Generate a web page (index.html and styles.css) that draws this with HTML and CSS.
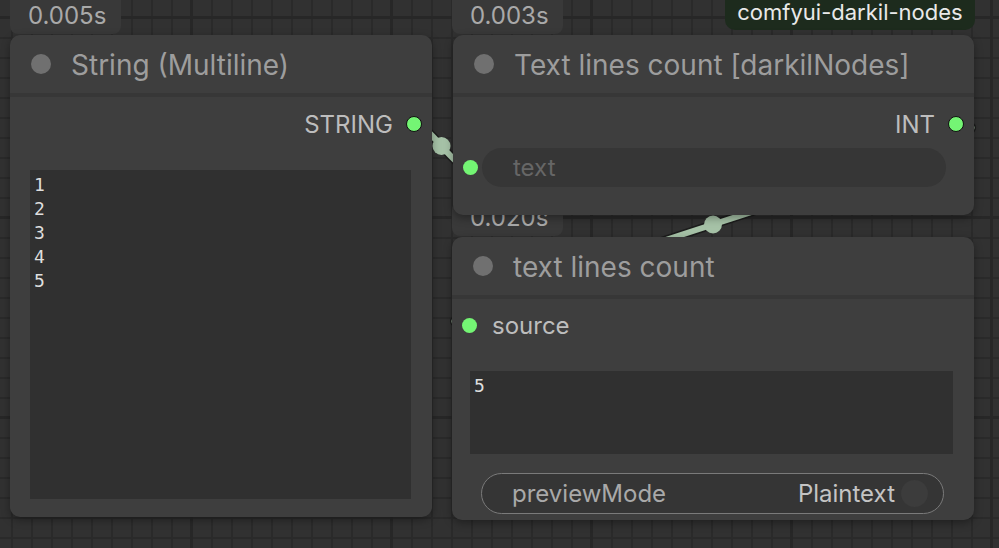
FILE: index.html
```html
<!DOCTYPE html>
<html lang="en">
<head>
    <meta charset="UTF-8">
    <meta name="viewport" content="width=device-width, initial-scale=1.0">
    <title>ComfyUI - text lines count</title>
    <link rel="stylesheet" href="styles.css">
</head>
<body>
    <div class="canvas">
        <svg class="links" width="999" height="548" viewBox="0 0 999 548">
            <!-- STRING -> text -->
            <path class="link-shadow" d="M413 124 C 431 124, 452 168, 470 168" />
            <path class="link" d="M413 124 C 431 124, 452 168, 470 168" />
            <circle class="link-dot" cx="441.5" cy="146" r="9" />
            <!-- INT -> source -->
            <path class="link-shadow" d="M956 124 C 1087 124, 339 325, 470 325" />
            <path class="link" d="M956 124 C 1087 124, 339 325, 470 325" />
            <circle class="link-dot" cx="713" cy="224.5" r="9" />
        </svg>

        <div class="time-badge badge-a">0.005s</div>
        <div class="time-badge badge-b">0.003s</div>
        <div class="time-badge badge-c">0.020s</div>
        <div class="pack-badge">comfyui-darkil-nodes</div>

        <!-- String (Multiline) -->
        <div class="node node-string">
            <div class="node-title">
                <span class="title-dot"></span>
                <span class="title-text">String (Multiline)</span>
            </div>
            <div class="node-body">
                <div class="slot-out">
                    <span>STRING</span>
                    <span class="slot-dot ring"></span>
                </div>
                <div class="textarea tall">1<br>2<br>3<br>4<br>5</div>
            </div>
        </div>

        <!-- Text lines count [darkilNodes] -->
        <div class="node node-count">
            <div class="node-title">
                <span class="title-dot"></span>
                <span class="title-text">Text lines count [darkilNodes]</span>
            </div>
            <div class="node-body">
                <div class="slot-out">
                    <span>INT</span>
                    <span class="slot-dot ring"></span>
                </div>
                <div class="slot-in">
                    <span class="slot-dot"></span>
                    <div class="text-widget">text</div>
                </div>
            </div>
        </div>

        <!-- text lines count (preview) -->
        <div class="node node-preview">
            <div class="node-title">
                <span class="title-dot"></span>
                <span class="title-text">text lines count</span>
            </div>
            <div class="node-body">
                <div class="slot-in source">
                    <span class="slot-dot"></span>
                    <span>source</span>
                </div>
                <div class="textarea short">5</div>
                <div class="combo">
                    <span class="combo-name">previewMode</span>
                    <span class="combo-value">Plaintext</span>
                    <span class="combo-knob"></span>
                </div>
            </div>
        </div>
    </div>
</body>
</html>
```

FILE: styles.css
```css
body {
    margin: 0;
    overflow: hidden;
    font-family: Inter, "Noto Sans", sans-serif;
    background-color: #313131;
    background-image:
        linear-gradient(90deg, #272727 3px, transparent 3px),
        linear-gradient(#272727 3px, transparent 3px),
        linear-gradient(90deg, #2a2a2a 2px, transparent 2px),
        linear-gradient(#2a2a2a 2px, transparent 2px);
    background-size: 200px 200px, 200px 200px, 20px 20px, 20px 20px;
    background-position: 190px 0, 0 16px, 11px 0, 0 17px;
}

.canvas {
    position: relative;
    width: 999px;
    height: 548px;
}

.links {
    position: absolute;
    left: 0;
    top: 0;
}

.link {
    fill: none;
    stroke: #a6c2a7;
    stroke-width: 6;
}

.link-shadow {
    fill: none;
    stroke: #1c1c1c;
    stroke-width: 9;
}

.link-dot {
    fill: #a6c2a7;
}

/* execution time badges */
.time-badge {
    position: absolute;
    width: 111px;
    height: 34px;
    padding-left: 18px;
    box-sizing: border-box;
    background: #393939;
    border-radius: 0 0 8px 8px;
    color: #a9a9a9;
    font-size: 24px;
    line-height: 32px;
}

.badge-a { left: 10px; top: 0; }
.badge-b { left: 452px; top: 0; }
.badge-c { left: 452px; top: 202px; border-radius: 8px; }

.pack-badge {
    position: absolute;
    left: 725px;
    top: 0;
    width: 250px;
    height: 30px;
    box-sizing: border-box;
    background: #1d2b1d;
    border-radius: 0 0 10px 10px;
    color: #e9e9e9;
    font-size: 22px;
    line-height: 25px;
    text-align: center;
}

/* nodes */
.node {
    position: absolute;
    display: flex;
    flex-direction: column;
    box-sizing: border-box;
    background: #3e3e3e;
    border-radius: 10px;
    box-shadow: 0 3px 8px rgba(0, 0, 0, 0.35);
}

.node-string { left: 10px; top: 35px; width: 422px; height: 482px; }
.node-count { left: 453px; top: 35px; width: 521px; height: 180px; }
.node-preview { left: 452px; top: 237px; width: 522px; height: 283px; }

.node-title {
    display: flex;
    align-items: center;
    gap: 20px;
    height: 58px;
    padding-left: 21px;
    border-bottom: 4px solid #373737;
    flex-shrink: 0;
}

.title-dot {
    width: 20px;
    height: 20px;
    border-radius: 50%;
    background: #707070;
}

.title-text {
    color: #9d9d9d;
    font-size: 28px;
    line-height: 34px;
    padding-top: 2px;
}

.node-body {
    display: flex;
    flex-direction: column;
    flex: 1;
    min-height: 0;
}

.slot-out {
    display: flex;
    justify-content: flex-end;
    align-items: center;
    gap: 13px;
    height: 54px;
    padding-right: 10px;
    color: #bdbdbd;
    font-size: 24px;
}

.slot-dot {
    width: 15px;
    height: 15px;
    border-radius: 50%;
    background: #74f574;
    flex-shrink: 0;
}

.slot-dot.ring {
    width: 14px;
    height: 14px;
    border: 1.5px solid #111;
}

.slot-in {
    display: flex;
    align-items: center;
    gap: 4px;
    padding-left: 10px;
}

.text-widget {
    width: 464px;
    height: 39px;
    box-sizing: border-box;
    padding-left: 31px;
    background: #363636;
    border-radius: 20px;
    color: #666;
    font-size: 24px;
    line-height: 39px;
}

.textarea {
    background: #303030;
    color: #dedede;
    font-family: "DejaVu Sans Mono", monospace;
    font-size: 18px;
    line-height: 24px;
    padding: 3px 4px;
    box-sizing: border-box;
}

.node-string .textarea {
    margin: 19px 21px 18px 20px;
    flex: 1;
}

.node-count .slot-in {
    margin-top: -3px;
}

.source {
    height: 52px;
    gap: 15px;
    color: #bdbdbd;
    font-size: 24px;
}

.textarea.short {
    height: 83px;
    margin: 20px 21px 0 18px;
}

.combo {
    display: flex;
    align-items: center;
    height: 41px;
    margin: 19px 30px 0 29px;
    padding: 0 15px 0 30px;
    box-sizing: border-box;
    border: 1.5px solid #7a7a7a;
    border-radius: 21px;
    background: #353535;
    font-size: 24px;
}

.combo-name {
    color: #a9a9a9;
    flex: 1;
}

.combo-value {
    color: #c4c4c4;
}

.combo-knob {
    width: 27px;
    height: 27px;
    margin-left: 6px;
    border-radius: 50%;
    background: #3c3c3c;
}
```
